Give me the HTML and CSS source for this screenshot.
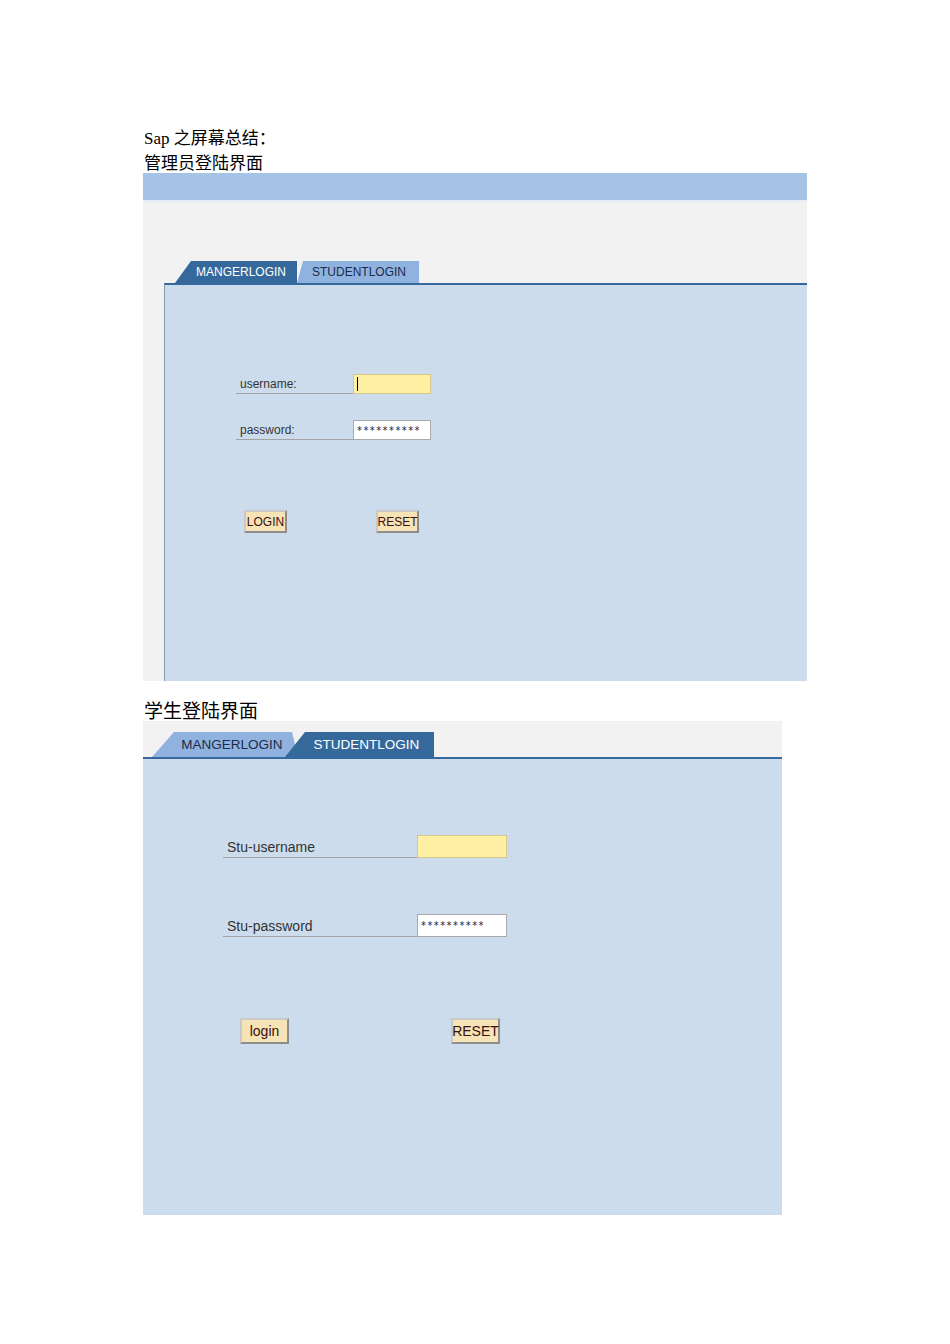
FILE: index.html
```html
<!DOCTYPE html>
<html lang="zh">
<head>
    <meta charset="UTF-8">
    <title>Sap 之屏幕总结</title>
    <link rel="stylesheet" href="styles.css">
</head>
<body>
    <div class="doc">
        <p class="line">Sap 之屏幕总结：</p>
        <p class="line">管理员登陆界面</p>

        <!-- 管理员登陆 -->
        <div class="shot shot-one">
            <div class="topbar"></div>
            <div class="gray-area">
                <div class="tabs">
                    <div class="tab tab-dark">MANGERLOGIN</div>
                    <div class="tab tab-light">STUDENTLOGIN</div>
                </div>
                <div class="panel">
                    <div class="field">
                        <span class="label">username:</span>
                        <span class="input input-yellow"><span class="caret"></span></span>
                    </div>
                    <div class="field">
                        <span class="label">password:</span>
                        <span class="input input-white">**********</span>
                    </div>
                    <div class="buttons">
                        <span class="btn">LOGIN</span>
                        <span class="btn">RESET</span>
                    </div>
                </div>
            </div>
        </div>

        <p class="line line-big">学生登陆界面</p>

        <!-- 学生登陆 -->
        <div class="shot shot-two">
            <div class="tabs">
                <div class="tab tab-light">MANGERLOGIN</div>
                <div class="tab tab-dark">STUDENTLOGIN</div>
            </div>
            <div class="panel">
                <div class="field">
                    <span class="label">Stu-username</span>
                    <span class="input input-yellow"></span>
                </div>
                <div class="field">
                    <span class="label">Stu-password</span>
                    <span class="input input-white">**********</span>
                </div>
                <div class="buttons">
                    <span class="btn">login</span>
                    <span class="btn">RESET</span>
                </div>
            </div>
        </div>
    </div>
</body>
</html>
```

FILE: styles.css
```css
* {
    margin: 0;
    padding: 0;
    box-sizing: border-box;
}

body {
    background: #fff;
    font-family: "Liberation Serif", "Noto Sans CJK SC", serif;
    color: #000;
}

.doc {
    padding: 126px 0 0 143px;
}

.line {
    font-size: 17px;
    line-height: 25px;
    padding-left: 1px;
}

.line-big {
    font-size: 19px;
    line-height: 26px;
    padding-top: 18px;
    margin-bottom: -4px;
}

/* Ventanas */
.shot {
    font-family: "Liberation Sans", sans-serif;
    display: flex;
    flex-direction: column;
}

.shot-one {
    width: 664px;
    height: 508px;
    margin-top: -3px;
}

.shot-two {
    width: 639px;
    height: 494px;
    background: #f2f2f2;
}

.topbar {
    height: 29px;
    background: #a5c3e5;
    border-bottom: 2px solid #e6edf6;
}

.gray-area {
    flex: 1;
    background: #f2f2f2;
    display: flex;
    flex-direction: column;
    padding-top: 59px;
}

.tabs {
    display: flex;
    height: 22px;
}

.tab {
    display: flex;
    align-items: center;
    justify-content: center;
    font-size: 12px;
}

.tab-dark {
    background: #36699b;
    color: #fff;
}

.tab-light {
    background: #8fb3de;
    color: #1d2b4a;
}

.shot-one .tabs {
    padding-left: 32px;
}

.shot-one .tab-dark {
    width: 122px;
    padding-left: 10px;
    clip-path: polygon(16px 0, 100% 0, 100% 100%, 0 100%);
}

.shot-one .tab-light {
    width: 122px;
    padding-left: 2px;
    clip-path: polygon(6px 0, 100% 0, 100% 100%, 0 100%);
}

.shot-two .tabs {
    height: 25px;
    margin-top: 11px;
    padding-left: 9px;
}

.shot-two .tab {
    font-size: 13.5px;
}

.shot-two .tab-light {
    width: 146px;
    padding-left: 14px;
    clip-path: polygon(22px 0, 140px 0, 146px 100%, 0 100%);
}

.shot-two .tab-dark {
    width: 149px;
    margin-left: -13px;
    padding-left: 14px;
    clip-path: polygon(20px 0, 100% 0, 100% 100%, 0 100%);
}

.panel {
    flex: 1;
    background: #cddced;
    border-top: 2px solid #36699b;
    display: flex;
    flex-direction: column;
}

.shot-one .panel {
    margin-left: 21px;
    border-left: 1px solid #8a9bb0;
    padding: 89px 0 0 71px;
}

.shot-two .panel {
    padding: 76px 0 0 80px;
}

/* Campos */
.field {
    display: flex;
    align-items: flex-end;
}

.label {
    color: #333;
    font-size: 12px;
    line-height: 14px;
    padding: 0 0 2px 4px;
    border-bottom: 1px solid #a3a3a3;
}

.input {
    height: 20px;
    border: 1px solid #a9a9a9;
    font-family: "DejaVu Sans", sans-serif;
    font-size: 10px;
    letter-spacing: 1.4px;
    line-height: 20px;
    padding-left: 3px;
    overflow: hidden;
    white-space: nowrap;
    color: #202040;
}

.input-yellow {
    background: #fff0a3;
    border-color: #d4c98a;
}

.input-white {
    background: #fff;
}

.caret {
    display: inline-block;
    width: 1px;
    height: 14px;
    margin-top: 2px;
    background: #000;
    vertical-align: top;
}

.shot-one .label {
    width: 117px;
}

.shot-one .input {
    width: 78px;
}

.shot-one .field + .field {
    margin-top: 26px;
}

.shot-two .label {
    width: 194px;
    font-size: 14px;
    line-height: 16px;
}

.shot-two .input {
    width: 90px;
    height: 23px;
    line-height: 22px;
}

.shot-two .field + .field {
    margin-top: 56px;
}

/* Botones */
.buttons {
    display: flex;
}

.btn {
    display: flex;
    align-items: center;
    justify-content: center;
    background: #f6e3b6;
    border: 2px solid #8d8d8d;
    border-top-color: #c9c9c9;
    border-left-color: #c9c9c9;
    color: #3a1010;
    font-size: 12px;
}

.shot-one .buttons {
    margin-top: 70px;
    padding-left: 8px;
    gap: 89px;
}

.shot-one .btn {
    width: 43px;
    height: 23px;
}

.shot-two .buttons {
    margin-top: 81px;
    padding-left: 17px;
    gap: 162px;
}

.shot-two .btn {
    width: 49px;
    height: 26px;
    font-size: 14px;
}
```
